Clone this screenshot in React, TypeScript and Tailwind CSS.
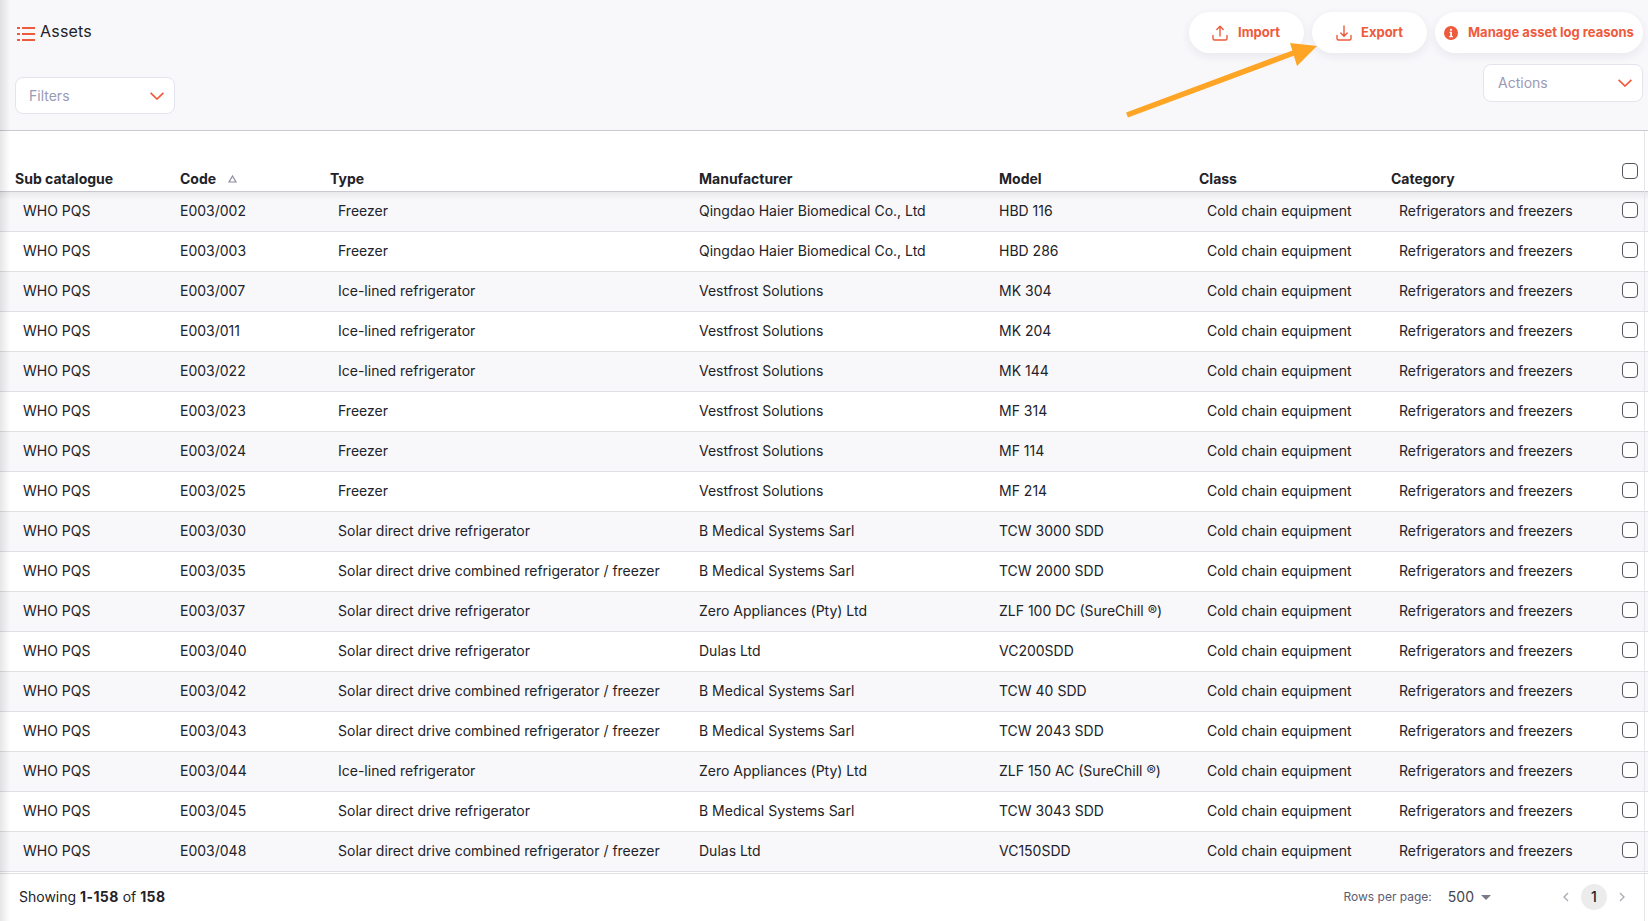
const ASSETS = [
  ['E003/002', 'Freezer', 'Qingdao Haier Biomedical Co., Ltd', 'HBD 116'],
  ['E003/003', 'Freezer', 'Qingdao Haier Biomedical Co., Ltd', 'HBD 286'],
  ['E003/007', 'Ice-lined refrigerator', 'Vestfrost Solutions', 'MK 304'],
  ['E003/011', 'Ice-lined refrigerator', 'Vestfrost Solutions', 'MK 204'],
  ['E003/022', 'Ice-lined refrigerator', 'Vestfrost Solutions', 'MK 144'],
  ['E003/023', 'Freezer', 'Vestfrost Solutions', 'MF 314'],
  ['E003/024', 'Freezer', 'Vestfrost Solutions', 'MF 114'],
  ['E003/025', 'Freezer', 'Vestfrost Solutions', 'MF 214'],
  ['E003/030', 'Solar direct drive refrigerator', 'B Medical Systems Sarl', 'TCW 3000 SDD'],
  ['E003/035', 'Solar direct drive combined refrigerator / freezer', 'B Medical Systems Sarl', 'TCW 2000 SDD'],
  ['E003/037', 'Solar direct drive refrigerator', 'Zero Appliances (Pty) Ltd', 'ZLF 100 DC (SureChill ®)'],
  ['E003/040', 'Solar direct drive refrigerator', 'Dulas Ltd', 'VC200SDD'],
  ['E003/042', 'Solar direct drive combined refrigerator / freezer', 'B Medical Systems Sarl', 'TCW 40 SDD'],
  ['E003/043', 'Solar direct drive combined refrigerator / freezer', 'B Medical Systems Sarl', 'TCW 2043 SDD'],
  ['E003/044', 'Ice-lined refrigerator', 'Zero Appliances (Pty) Ltd', 'ZLF 150 AC (SureChill ®)'],
  ['E003/045', 'Solar direct drive refrigerator', 'B Medical Systems Sarl', 'TCW 3043 SDD'],
  ['E003/048', 'Solar direct drive combined refrigerator / freezer', 'Dulas Ltd', 'VC150SDD'],
];

function ListIcon() {
  return (
    <svg className="ml-[1px] mt-[6px]" width="19" height="14" viewBox="0 0 19 14" fill="none" stroke="#ee5a3c" strokeWidth="1.8">
      <path d="M0 1h3M0 7h3M0 13h3" />
      <path d="M5 1h13M5 7h13M5 13h13" />
    </svg>
  );
}

function UploadIcon() {
  return (
    <svg width="16" height="16" viewBox="0 0 16 16" fill="none" stroke="#ee5a3c" strokeWidth="1.4" strokeLinecap="round" strokeLinejoin="round">
      <path d="M8 11V1.5M4.8 4.5 8 1.2l3.2 3.3" />
      <path d="M1 10.5v3a1.5 1.5 0 0 0 1.5 1.5h11a1.5 1.5 0 0 0 1.5-1.5v-3" />
    </svg>
  );
}

function DownloadIcon() {
  return (
    <svg width="16" height="16" viewBox="0 0 16 16" fill="none" stroke="#ee5a3c" strokeWidth="1.4" strokeLinecap="round" strokeLinejoin="round">
      <path d="M8 1v10M4.8 8 8 11.2 11.2 8" />
      <path d="M1 10.5v3a1.5 1.5 0 0 0 1.5 1.5h11a1.5 1.5 0 0 0 1.5-1.5v-3" />
    </svg>
  );
}

function InfoIcon() {
  return (
    <svg width="14" height="14" viewBox="0 0 14 14">
      <circle cx="7" cy="7" r="7" fill="#ee5a3c" />
      <path d="M5.6 5.8h2.4v4.2h.9v1.2H5.2V10h1v-3h-.6z" fill="#fff" />
      <circle cx="7" cy="3.8" r="1.1" fill="#fff" />
    </svg>
  );
}

function Chevron() {
  return (
    <svg width="14" height="8" viewBox="0 0 14 8" fill="none" stroke="#ee5a3c" strokeWidth="1.7">
      <path d="M0.6 0.8 7 7 13.4 0.8" />
    </svg>
  );
}

function Select({ label, className }: { label: string; className: string }) {
  return (
    <div className={`flex items-center justify-between bg-white border border-[#e4e4ee] rounded-lg text-sm text-[#9a9ab4] ${className}`}>
      {label}
      <Chevron />
    </div>
  );
}

function PillButton({ icon, label, className }: { icon: React.ReactNode; label: string; className: string }) {
  return (
    <div className={`flex items-center h-[41px] bg-white rounded-full text-[13px] font-bold text-[#ee5a3c] shadow-[0_3px_10px_rgba(40,40,80,0.08)] ${className}`}>
      {icon}
      {label}
    </div>
  );
}

function Checkbox({ className }: { className: string }) {
  return <div className={`w-4 h-4 rounded-[4px] border border-[#55555f] bg-white ${className}`} />;
}

export default function App() {
  return (
    <div className="relative h-[921px] w-full overflow-hidden bg-white font-['Inter',sans-serif] text-sm text-[#222228]">
      <div className="flex justify-between h-[131px] bg-[#f8f8fb] border-b border-[#c9c9d4]">
        <div className="pl-[16px] pt-[21px]">
          <div className="flex items-center gap-[4px] h-5 text-base tracking-[0.2px]">
            <ListIcon />
            <span>Assets</span>
          </div>
          <Select label="Filters" className="mt-[36px] -ml-[1px] w-[160px] h-[37px] pl-[13px] pr-[10px] tracking-normal" />
        </div>
        <div className="flex flex-col items-end pr-[5px] pt-[12px]">
          <div className="flex gap-2">
            <PillButton icon={<UploadIcon />} label="Import" className="w-[115px] pl-[23px] gap-[10px]" />
            <PillButton icon={<DownloadIcon />} label="Export" className="w-[115px] pl-[24px] gap-[9px]" />
            <PillButton icon={<InfoIcon />} label="Manage asset log reasons" className="w-[208px] pl-[9px] gap-[10px]" />
          </div>
          <Select label="Actions" className="mt-[11px] w-[160px] h-[38px] pl-[14px] pr-[10px]" />
        </div>
      </div>

      <table className="w-full table-fixed border-collapse">
        <colgroup>
          <col className="w-[180px]" />
          <col className="w-[150px]" />
          <col className="w-[369px]" />
          <col className="w-[300px]" />
          <col className="w-[200px]" />
          <col className="w-[192px]" />
          <col className="w-[231px]" />
          <col />
        </colgroup>
        <thead>
          <tr className="h-[60px] text-left align-bottom border-b border-[#c9c9d0]">
            <th className="pl-[15px] pb-[2px] font-bold">Sub catalogue</th>
            <th className="pb-[2px] font-bold">
              <span className="inline-flex items-center gap-[12px]">
                Code
                <svg width="9" height="8" viewBox="0 0 9 8" fill="none" stroke="#8a8aa0" strokeWidth="1.2">
                  <path d="M4.5 1 8 7H1z" />
                </svg>
              </span>
            </th>
            <th className="pb-[2px] font-bold">Type</th>
            <th className="pb-[2px] font-bold">Manufacturer</th>
            <th className="pb-[2px] font-bold">Model</th>
            <th className="pb-[2px] font-bold">Class</th>
            <th className="pb-[2px] font-bold">Category</th>
            <th className="pb-[12px]">
              <Checkbox className="" />
            </th>
          </tr>
        </thead>
        <tbody>
          {ASSETS.map((a, i) => (
            <tr key={a[0]} className={`h-10 border-b border-[#dfdfe4] ${i % 2 === 0 ? 'bg-[#f8f8fb]' : 'bg-white'}`}>
              <td className="pl-[23px]">WHO PQS</td>
              <td>{a[0]}</td>
              <td className="pl-[8px] whitespace-nowrap">{a[1]}</td>
              <td className="whitespace-nowrap">{a[2]}</td>
              <td className="whitespace-nowrap">{a[3]}</td>
              <td className="pl-[8px] whitespace-nowrap">Cold chain equipment</td>
              <td className="pl-[8px] whitespace-nowrap">Refrigerators and freezers</td>
              <td>
                <Checkbox className="-mt-[2px]" />
              </td>
            </tr>
          ))}
        </tbody>
      </table>

      <div className="flex items-center justify-between h-[48px] mt-[1px] border-t border-[#dfdfe4] pl-[19px] pr-[18px]">
        <div>
          Showing <span className="font-bold tracking-[0.4px]">1-158</span> of <span className="font-bold tracking-[0.4px]">158</span>
        </div>
        <div className="flex items-center">
          <span className="text-xs text-[#5c5c70]">Rows per page:</span>
          <span className="ml-[16px] text-[#44444f]">500</span>
          <svg className="ml-[7px]" width="10" height="5" viewBox="0 0 10 5" fill="#7a7a88">
            <path d="M0 0h10L5 5z" />
          </svg>
          <svg className="ml-[67px]" width="16" height="16" viewBox="0 0 16 16" fill="none" stroke="#a8a8b4" strokeWidth="1.3">
            <path d="M10 4 6 8l4 4" />
          </svg>
          <div className="flex items-center justify-center ml-[7px] w-[26px] h-[26px] rounded-full bg-[#ececec] font-medium">1</div>
          <svg className="ml-[7px]" width="16" height="16" viewBox="0 0 16 16" fill="none" stroke="#a8a8b4" strokeWidth="1.3">
            <path d="m6 4 4 4-4 4" />
          </svg>
        </div>
      </div>

      {/* arrow drawn over the screenshot */}
      <svg className="absolute left-0 top-0 pointer-events-none" width="1648" height="921">
        <path d="M1127 115 1296 52" stroke="#ffa526" strokeWidth="5.5" />
        <path d="M1317 46 1290 43 1297 66z" fill="#ffa526" />
      </svg>
      <div className="absolute left-0 top-[192px] w-full h-[8px] bg-gradient-to-b from-black/[0.06] to-transparent" />
      <div className="absolute left-0 top-0 w-[10px] h-full bg-gradient-to-r from-black/10 to-transparent" />
      <div className="absolute right-[3px] top-[131px] w-px h-full bg-[#e6e6ea]" />
    </div>
  );
}
